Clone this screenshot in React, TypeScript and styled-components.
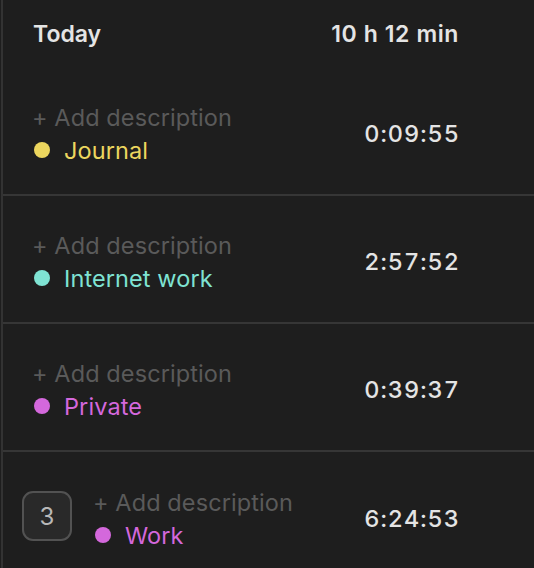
import styled, { createGlobalStyle } from "styled-components";

const GlobalStyle = createGlobalStyle`
    html, body {
        margin: 0;
        padding: 0;
        background-color: #1e1e1e;
    }
    body {
        font-family: Inter, "Noto Sans", "Liberation Sans", sans-serif;
        -webkit-font-smoothing: antialiased;
    }
`;

const Panel = styled.div`
    margin-left: 1px;
    border-left: 2px solid #333333;
    min-height: 568px;
    background-color: #1e1e1e;
    color: #e4e4e4;
`;

const DayHeader = styled.div`
    height: 68px;
    display: flex;
    align-items: center;
    justify-content: space-between;
    padding: 0 75px 0 30px;
    font-size: 23px;
    font-weight: 600;
    .total {
        letter-spacing: 0.6px;
    }
`;

const EntryRow = styled.div<{ last?: boolean }>`
    height: 128px;
    box-sizing: border-box;
    display: flex;
    align-items: center;
    padding: 6px 75px 0 29px;
    border-bottom: ${props => props.last ? 'none' : '2px solid #363636'};
`;

const GroupBadge = styled.div`
    width: 50px;
    height: 50px;
    box-sizing: border-box;
    flex-shrink: 0;
    margin: -6px 21px 0 -10px;
    border: 2px solid #525252;
    border-radius: 11px;
    background-color: #292929;
    display: flex;
    align-items: center;
    justify-content: center;
    color: #b8b8b8;
    font-size: 24px;
`;

const EntryInfo = styled.div`
    flex: 1;
    display: flex;
    flex-direction: column;
`;

const Description = styled.div`
    height: 32px;
    line-height: 32px;
    font-size: 23.5px;
    letter-spacing: 0.1px;
    color: #5a5a5a;
`;

const Project = styled.div<{ color: string }>`
    height: 32px;
    display: flex;
    align-items: center;
    gap: 14px;
    font-size: 23.5px;
    letter-spacing: 0.1px;
    color: ${props => props.color};
    &::before {
        content: "";
        width: 16px;
        height: 16px;
        border-radius: 50%;
        background-color: ${props => props.color};
        margin-left: 2px;
    }
`;

const Duration = styled.div`
    font-size: 23.5px;
    font-weight: 500;
    letter-spacing: 1px;
    font-variant-numeric: tabular-nums;
    color: #e4e4e4;
    margin: -2px -1px 0 0;
`;

type Entry = { project: string; color: string; time: string; count?: number };

const entries: Entry[] = [
    { project: "Journal", color: "#ecd65e", time: "0:09:55" },
    { project: "Internet work", color: "#7fe3d3", time: "2:57:52" },
    { project: "Private", color: "#d468dc", time: "0:39:37" },
    { project: "Work", color: "#d468dc", time: "6:24:53", count: 3 },
];

export default function App() {
    return (
        <>
            <GlobalStyle />
            <Panel>
                <DayHeader>
                    <span>Today</span>
                    <span className="total">10 h 12 min</span>
                </DayHeader>
                {entries.map((entry, i) => (
                    <EntryRow key={entry.project} last={i === entries.length - 1}>
                        {entry.count && <GroupBadge>{entry.count}</GroupBadge>}
                        <EntryInfo>
                            <Description>+ Add description</Description>
                            <Project color={entry.color}>{entry.project}</Project>
                        </EntryInfo>
                        <Duration>{entry.time}</Duration>
                    </EntryRow>
                ))}
            </Panel>
        </>
    );
}
